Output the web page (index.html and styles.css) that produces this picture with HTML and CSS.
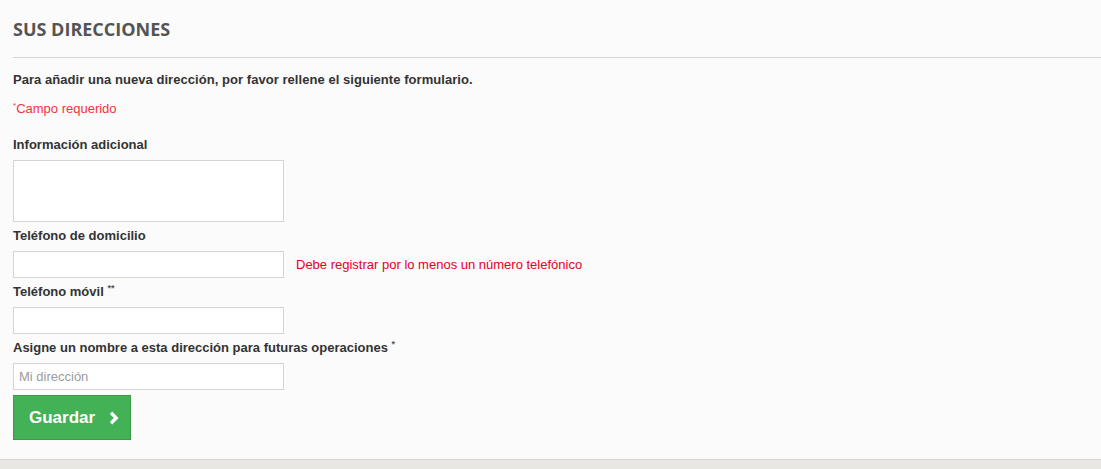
FILE: index.html
```html
<!DOCTYPE html>
<html lang="es">
<head>
<meta charset="utf-8">
<title>Sus direcciones</title>
<link rel="stylesheet" href="styles.css">
</head>
<body>
<div class="panel">
  <h1 class="page-heading">Sus direcciones</h1>
  <p class="intro">Para añadir una nueva dirección, por favor rellene el siguiente formulario.</p>
  <p class="required-note"><sup>*</sup>Campo requerido</p>
  <form class="address-form">
    <div class="form-group">
      <label class="label">Información adicional</label>
      <textarea class="field field-area"></textarea>
    </div>
    <div class="form-group">
      <label class="label">Teléfono de domicilio</label>
      <div class="field-row">
        <input class="field" type="text">
        <span class="field-error">Debe registrar por lo menos un número telefónico</span>
      </div>
    </div>
    <div class="form-group">
      <label class="label">Teléfono móvil <sup class="mark">**</sup></label>
      <input class="field" type="text">
    </div>
    <div class="form-group">
      <label class="label">Asigne un nombre a esta dirección para futuras operaciones <sup class="mark">*</sup></label>
      <input class="field" type="text" placeholder="Mi dirección">
    </div>
    <button class="btn-save" type="button">
      <span>Guardar</span>
      <svg class="chev" width="10" height="14" viewBox="0 0 10 14"><polyline points="2,1.8 7.2,7 2,12.2" fill="none" stroke="#fff" stroke-width="3.4"/></svg>
    </button>
  </form>
</div>
</body>
</html>
```

FILE: styles.css
```css
html, body {
  margin: 0;
  padding: 0;
}
body {
  background: #e8e7e1;
  font-family: "Liberation Sans", Arial, sans-serif;
  font-size: 13px;
  line-height: 18px;
  color: #333;
}
.panel {
  background: #fbfbfb;
  padding: 18px 0 19px 13px;
  border-bottom: 1px solid #d6d4d4;
}
.page-heading {
  margin: 0 0 13px 0;
  padding: 0 0 17px 0;
  font-family: "Open Sans", sans-serif;
  font-weight: 700;
  font-size: 18px;
  line-height: 22px;
  text-transform: uppercase;
  color: #555454;
  border-bottom: 1px solid #d6d4d4;
}
.intro {
  margin: 0 0 11px 0;
  font-weight: 700;
  color: #333;
  letter-spacing: 0.05px;
}
.required-note {
  margin: 0 0 17px 0;
  color: #f13340;
}
.required-note sup {
  font-size: 8px;
  line-height: 0;
  vertical-align: 5px;
}
.form-group {
  margin-bottom: 4px;
}
.label {
  display: block;
  font-weight: 700;
  padding-top: 1px;
  margin-bottom: 6px;
  color: #333;
}
.mark {
  font-size: 9px;
  line-height: 0;
  vertical-align: 5px;
  color: #555;
}
.field {
  display: block;
  box-sizing: border-box;
  width: 271px;
  height: 27px;
  margin: 0;
  padding: 3px 5px;
  border: 1px solid #d6d4d4;
  background: #fff;
  font-family: "Liberation Sans", Arial, sans-serif;
  font-size: 13px;
  color: #9c9b9b;
  outline: none;
}
.field::placeholder {
  color: #9c9b9b;
}
.field-area {
  height: 62px;
  resize: none;
}
.field-row {
  display: flex;
  align-items: center;
  gap: 12px;
}
.field-error {
  color: #e3001b;
  font-size: 13px;
}
.btn-save {
  box-sizing: border-box;
  display: flex;
  align-items: center;
  gap: 14px;
  width: 118px;
  height: 45px;
  margin-top: 5px;
  padding: 0 0 0 15px;
  border: 1px solid #399a49;
  background: #43b155;
  color: #fff;
  font-family: "Liberation Sans", Arial, sans-serif;
  font-weight: 700;
  font-size: 17px;
  cursor: pointer;
}
.chev {
  display: block;
}
```
